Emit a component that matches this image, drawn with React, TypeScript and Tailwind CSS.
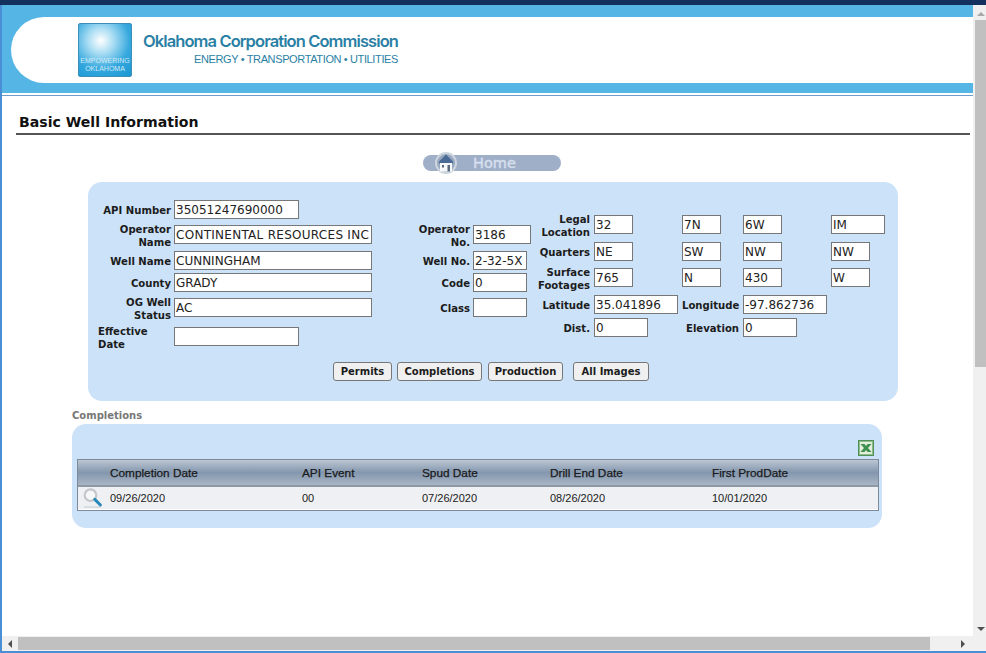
const verdana = "font-['DejaVu_Sans',Verdana,sans-serif]";
const arial = "font-['Liberation_Sans',Arial,sans-serif]";

function Box({ value = '', className = '' }: { value?: string; className?: string }) {
  return (
    <div className={`h-[19px] shrink-0 border border-[#777] bg-white pt-[1px] pr-[2px] pl-[1px] text-[12px] leading-[17px] whitespace-nowrap text-[#222] ${className}`}>
      {value}
    </div>
  );
}

function Label({ children, className = '', left = false }: { children: React.ReactNode; className?: string; left?: boolean }) {
  return (
    <div className={`shrink-0 pt-[2px] text-[10.1px] leading-[13px] font-bold text-[#1c1c1c] ${left ? 'text-left' : 'text-right'} ${className}`}>
      {children}
    </div>
  );
}

const legalRow = 'grid h-[19px] grid-cols-[60px_88px_61px_88px_54px] grid-rows-[19px] items-center';

function LegalRow({ label, cells, className = '' }: { label: React.ReactNode; cells: string[]; className?: string }) {
  return (
    <div className={`${legalRow} ${className}`}>
      <Label className="pr-[4px]">{label}</Label>
      <Box value={cells[0]} className="w-[39px]" />
      <Box value={cells[1]} className="w-[39px]" />
      <Box value={cells[2]} className="w-[39px]" />
      <Box value={cells[3]} className={cells[3] === 'IM' ? 'w-[54px]' : 'w-[39px]'} />
    </div>
  );
}

function HomeIcon() {
  return (
    <svg viewBox="0 0 22 22" className="-my-[3px] ml-[12px] h-[22px] w-[22px]">
      <circle cx="11" cy="11" r="11" fill="#cdd5dd" />
      <circle cx="11" cy="11" r="9" fill="#98a8c0" />
      <path d="M11 2.5 L18 9.5 V11.5 H4 V9.5 Z" fill="#4a6a96" />
      <path d="M5 11 H17 V19.5 H5 Z" fill="#f6f7f9" />
      <rect x="7" y="13" width="2" height="2.5" fill="#5b6a80" />
      <rect x="12.5" y="13" width="2.5" height="6.5" fill="#5b6a80" />
    </svg>
  );
}

function ExcelIcon() {
  return (
    <svg viewBox="0 0 16 16" className="h-[16px] w-[16px]">
      <rect x="0.5" y="0.5" width="15" height="15" fill="#e4eedb" stroke="#4f8f58" />
      <rect x="1.5" y="1.5" width="13" height="13" fill="none" stroke="#8dbb8c" strokeWidth="1" />
      <path d="M2.5 4 H6.5 L8 6 L9.5 4 H13.5 L10 8 L13.5 12 H9.5 L8 10 L6.5 12 H2.5 L6 8 Z" fill="#3f9150" />
    </svg>
  );
}

function SearchIcon() {
  return (
    <svg viewBox="0 0 20 20" className="h-[20px] w-[20px]">
      <path d="M1 19 H18" stroke="#cfd2d6" strokeWidth="1.2" />
      <circle cx="7.5" cy="7.2" r="5.8" fill="#f6f7f9" stroke="#c3c7cb" strokeWidth="2.2" />
      <path d="M11.8 11.4 L17.4 17" stroke="#2a88b8" strokeWidth="3" strokeLinecap="round" />
    </svg>
  );
}

const colsTemplate = 'grid grid-cols-[32px_192px_120px_128px_162px_1fr] items-center';

export default function App() {
  return (
    <div className={`flex h-[653px] w-[986px] flex-col overflow-hidden bg-white ${verdana}`}>
      <div className="h-[5px] shrink-0 bg-[#14305c]" />

      <div className="flex min-h-0 flex-1">
        {/* page */}
        <div className="w-[973px] shrink-0 border-l-2 border-[#4a8fd6]">
          <div className="h-[88px] bg-[#55b5e5] pt-[12px] pl-[9px]">
            <div className={`flex h-[66px] items-start rounded-l-[33px] bg-white pl-[67px] pt-[6px] ${arial}`}>
              <div className="flex h-[54px] w-[54px] flex-col items-center justify-end rounded-[2px] border border-[#3d8fb8] bg-[radial-gradient(circle_at_42%_32%,#ffffff_0%,#a8dcf3_28%,#35a8de_62%,#1a96d2_100%)] pb-[3px] text-[7px] leading-[8px] text-[#cfeaf7]">
                <span>EMPOWERING</span>
                <span>OKLAHOMA</span>
              </div>
              <div className="ml-[11px] flex flex-col items-end pt-[8px] text-[#2a7fa5]">
                <span className="font-['Inter',sans-serif] text-[16.5px] leading-[20px] font-semibold tracking-[-0.9px] whitespace-nowrap">Oklahoma Corporation Commission</span>
                <span className="mt-[2px] text-[11px] leading-[13px] tracking-[-0.37px] whitespace-nowrap">ENERGY • TRANSPORTATION • UTILITIES</span>
              </div>
            </div>
          </div>
          <div className="mt-[2px] h-px bg-[#6f9bc8]" />

          <div className="mt-[17px] ml-[14px] w-[954px] border-b-2 border-[#555] pb-[2px] pl-[3px] text-[14.1px] leading-[18px] font-bold text-[#111]">
            Basic Well Information
          </div>

          <div className="mt-[20px] ml-[421px] flex h-[16px] w-[138px] items-center rounded-full bg-[#9fafc8]">
            <HomeIcon />
            <span className="ml-[16px] text-[14.5px] leading-[16px] text-[#d5deec] [-webkit-text-stroke:0.5px_#d5deec]">Home</span>
          </div>

          {/* well form */}
          <div className="mt-[11px] ml-[86px] h-[219px] w-[810px] rounded-[14px] bg-[#cce2f8] pt-[18px] pl-[10px]">
            <div className="flex h-[146px]">
              <div className="flex w-[274px] flex-col">
                <div className="flex h-[19px] items-center gap-[3px]">
                  <Label className="w-[73px]">API Number</Label>
                  <Box value="35051247690000" className="w-[125px]" />
                </div>
                <div className="mt-[6px] flex h-[19px] items-center gap-[3px]">
                  <Label className="w-[73px]">Operator<br />Name</Label>
                  <Box value="CONTINENTAL RESOURCES INC" className="w-[198px] tracking-[0.28px]" />
                </div>
                <div className="mt-[7px] flex h-[19px] items-center gap-[3px]">
                  <Label className="w-[73px]">Well Name</Label>
                  <Box value="CUNNINGHAM" className="w-[198px]" />
                </div>
                <div className="mt-[3px] flex h-[19px] items-center gap-[3px]">
                  <Label className="w-[73px]">County</Label>
                  <Box value="GRADY" className="w-[198px]" />
                </div>
                <div className="mt-[6px] flex h-[19px] items-center gap-[3px]">
                  <Label className="w-[73px]">OG Well<br />Status</Label>
                  <Box value="AC" className="w-[198px]" />
                </div>
                <div className="mt-[10px] flex h-[19px] items-center gap-[3px]">
                  <Label left className="w-[73px]">Effective<br />Date</Label>
                  <Box className="w-[125px]" />
                </div>
              </div>

              <div className="ml-[38px] flex w-[121px] flex-col pt-[25px]">
                <div className="flex h-[19px] items-center gap-[3px]">
                  <Label className="w-[60px]">Operator<br />No.</Label>
                  <Box value="3186" className="w-[58px]" />
                </div>
                <div className="mt-[7px] flex h-[19px] items-center gap-[3px]">
                  <Label className="w-[60px]">Well No.</Label>
                  <Box value="2-32-5X" className="w-[54px]" />
                </div>
                <div className="mt-[3px] flex h-[19px] items-center gap-[3px]">
                  <Label className="w-[60px]">Code</Label>
                  <Box value="0" className="w-[54px]" />
                </div>
                <div className="mt-[6px] flex h-[19px] items-center gap-[3px]">
                  <Label className="w-[60px]">Class</Label>
                  <Box className="w-[54px]" />
                </div>
              </div>

              <div className="ml-[3px] flex flex-col pt-[15px]">
                <LegalRow label={<>Legal<br />Location</>} cells={['32', '7N', '6W', 'IM']} />
                <LegalRow label="Quarters" cells={['NE', 'SW', 'NW', 'NW']} className="mt-[8px]" />
                <LegalRow label={<>Surface<br />Footages</>} cells={['765', 'N', '430', 'W']} className="mt-[7px]" />
                <div className={`${legalRow} mt-[8px]`}>
                  <Label className="pr-[4px]">Latitude</Label>
                  <Box value="35.041896" className="w-[84px]" />
                  <Label className="pr-[4px]">Longitude</Label>
                  <Box value="-97.862736" className="w-[84px]" />
                </div>
                <div className={`${legalRow} mt-[4px]`}>
                  <Label className="pr-[4px]">Dist.</Label>
                  <Box value="0" className="w-[54px]" />
                  <Label className="pr-[4px]">Elevation</Label>
                  <Box value="0" className="w-[54px]" />
                </div>
              </div>
            </div>

            <div className="mt-[16px] ml-[235px] flex text-[10px] font-bold text-[#1c1c1c]">
              <button className="h-[19px] w-[59px] rounded-[3px] border border-[#777] bg-[#f0f0f0]">Permits</button>
              <button className="ml-[5px] h-[19px] w-[85px] rounded-[3px] border border-[#777] bg-[#f0f0f0]">Completions</button>
              <button className="ml-[6px] h-[19px] w-[75px] rounded-[3px] border border-[#777] bg-[#f0f0f0]">Production</button>
              <button className="ml-[10px] h-[19px] w-[76px] rounded-[3px] border border-[#777] bg-[#f0f0f0]">All Images</button>
            </div>
          </div>

          {/* completions */}
          <div className="mt-[8px] ml-[70px] h-[13px] text-[10px] leading-[13px] font-bold text-[#777]">Completions</div>
          <div className="mt-[2px] ml-[70px] h-[104px] w-[810px] rounded-[14px] bg-[#cce2f8] pt-[16px] pl-[5px]">
            <div className="flex h-[17px] justify-end pr-[8px]">
              <ExcelIcon />
            </div>
            <div className={`mt-[2px] w-[802px] border border-[#7d8a99] text-[#1a1a1a] ${arial}`}>
              <div className={`${colsTemplate} h-[27px] border-b-2 border-[#8e99a6] bg-gradient-to-b from-[#bcc6d2] via-[#8497ae] to-[#a9b5c5] pt-[2px] text-[11.8px] [-webkit-text-stroke:0.25px_#1a1a1a]`}>
                <div />
                <div>Completion Date</div>
                <div>API Event</div>
                <div>Spud Date</div>
                <div>Drill End Date</div>
                <div>First ProdDate</div>
              </div>
              <div className={`${colsTemplate} h-[23px] border-b border-white bg-[#eef0f3] text-[11px]`}>
                <div className="pl-[5px]"><SearchIcon /></div>
                <div>09/26/2020</div>
                <div>00</div>
                <div>07/26/2020</div>
                <div>08/26/2020</div>
                <div>10/01/2020</div>
              </div>
            </div>
          </div>
        </div>

        {/* vertical scrollbar */}
        <div className="flex w-[13px] shrink-0 flex-col items-end bg-[#f0f0f0]">
          <div className="flex h-[15px] w-[11px] items-center justify-center pt-[3px]">
            <div className="h-0 w-0 border-x-[4px] border-b-[4px] border-x-transparent border-b-[#a8a8a8]" />
          </div>
          <div className="h-[347px] w-[11px] bg-[#c0c0c0]" />
          <div className="mt-auto flex h-[15px] w-[11px] items-center justify-center">
            <div className="h-0 w-0 border-x-[4px] border-t-[4px] border-x-transparent border-t-[#505050]" />
          </div>
        </div>
      </div>

      {/* horizontal scrollbar */}
      <div className="flex h-[15px] shrink-0 items-center border-l-2 border-[#4a8fd6] bg-[#f0f0f0]">
        <div className="flex w-[16px] justify-center">
          <div className="h-0 w-0 border-y-[4px] border-r-[4px] border-y-transparent border-r-[#505050]" />
        </div>
        <div className="h-[13px] w-[912px] bg-[#c0c0c0]" />
        <div className="ml-[31px] h-0 w-0 border-y-[4px] border-l-[4px] border-y-transparent border-l-[#505050]" />
      </div>
      <div className="h-[2px] shrink-0 bg-[#4a8fd6]" />
    </div>
  );
}
